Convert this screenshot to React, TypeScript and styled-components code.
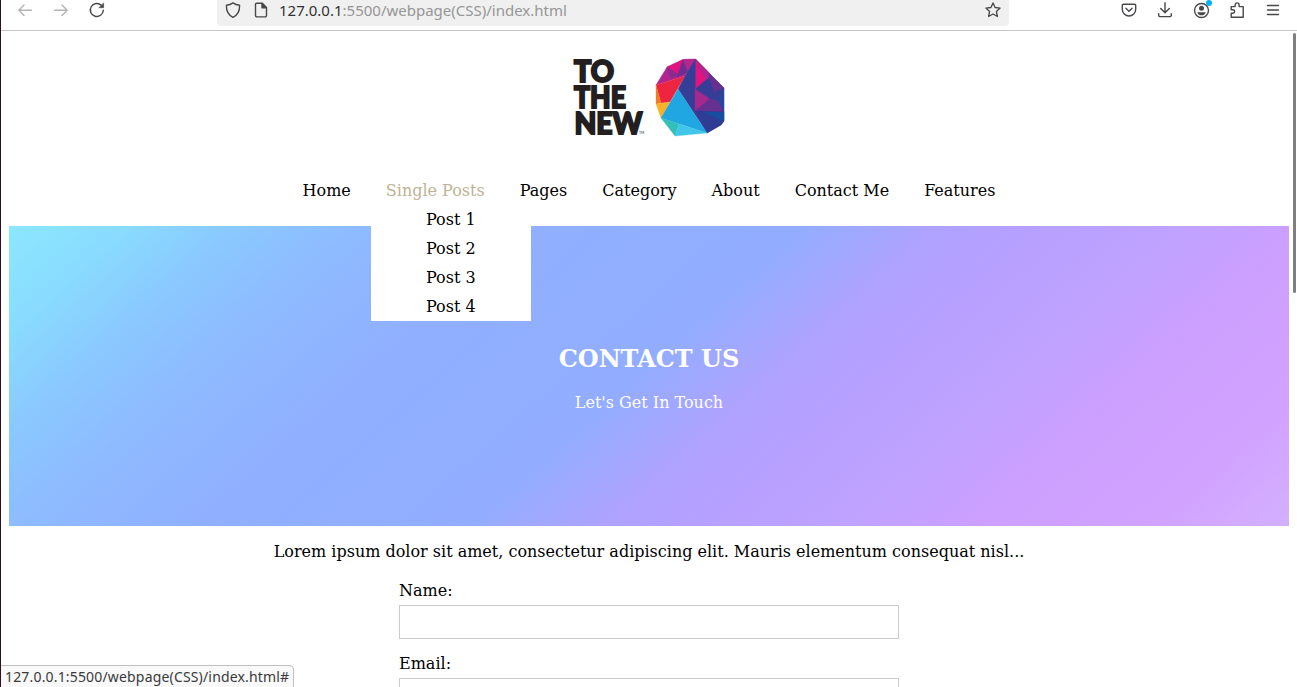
import React from "react";
import styled, { createGlobalStyle } from "styled-components";

const GlobalStyle = createGlobalStyle`
  * { box-sizing: border-box; }
  html, body { margin: 0; padding: 0; overflow: hidden; background: #fff; }
`;

const Window = styled.div`
  position: relative;
  height: 687px;
  overflow: hidden;
  border-left: 1px solid #2c0f22;
  background: #fff;
  color: #000;
  font: 16px/19px "DejaVu Serif", serif;
`;

const Toolbar = styled.header`
  display: flex;
  height: 31px;
  border-bottom: 1px solid #c6c6c6;
  color: #4a4a4f;
`;

const NavButtons = styled.div`
  display: flex;
  gap: 20px;
  width: 216px;
  padding: 2px 0 0 16px;
`;

const AddressBar = styled.div`
  display: flex;
  width: 792px;
  height: 26px;
  padding: 2px 8px 0;
  background: #f0f0f0;
  border-radius: 0 0 4px 4px;
`;

const Url = styled.div`
  flex: 1;
  margin: -2px 0 0 10px;
  color: #969696;
  font: 15px/20px "Noto Sans", "Open Sans", sans-serif;
  white-space: nowrap;
`;

const Host = styled.span`
  color: #333;
`;

const Actions = styled.div`
  display: flex;
  gap: 20px;
  margin-left: auto;
  padding: 2px 16px 0 0;
`;

const Glyph = styled.svg<{ $faded?: boolean; $gap?: number }>`
  display: block;
  flex: none;
  width: 16px;
  height: 16px;
  margin-right: ${(p) => p.$gap ?? 0}px;
  overflow: visible;
  fill: none;
  stroke: ${(p) => (p.$faded ? "#b4b4b4" : "#48484b")};
  stroke-width: 1.4;
  stroke-linecap: round;
  stroke-linejoin: round;
`;

const Page = styled.main`
  padding: 0 8px;
`;

const Brand = styled.div`
  display: flex;
  justify-content: center;
  height: 150px;
  padding-top: 14px;
`;

const Logo = styled.svg`
  display: block;
  width: 160px;
  height: 100px;
`;

const Menu = styled.nav`
  display: flex;
  justify-content: center;
  gap: 35px;
  height: 45px;
`;

const MenuItem = styled.div<{ $active?: boolean }>`
  position: relative;
  color: ${(p) => (p.$active ? "#bdb395" : "#000")};
  white-space: nowrap;
`;

const Dropdown = styled.div`
  position: absolute;
  top: 24px;
  left: -15px;
  width: 160px;
  background: #fff;
  color: #000;
  text-align: center;
`;

const DropdownItem = styled.div`
  padding: 5px;
`;

const Hero = styled.section`
  display: flex;
  flex-direction: column;
  align-items: center;
  height: 300px;
  padding-top: 118px;
  color: #fff;
  background: linear-gradient(
    138deg,
    #8ce7ff 0%,
    #89dcff 7%,
    #8ac9ff 14%,
    #8ebaff 22%,
    #90afff 33%,
    #92adff 49%,
    #b0a2ff 58%,
    #b8a0ff 65%,
    #c0a2ff 73%,
    #cd9fff 81%,
    #d1a2ff 91%,
    #d3b0ff 100%
  );
`;

const Title = styled.h1`
  margin: 0 0 20px;
  font-size: 24px;
  line-height: 29px;
`;

const Tagline = styled.p`
  margin: 0;
`;

const Intro = styled.p`
  margin: 16px 0 20px;
  text-align: center;
  white-space: nowrap;
`;

const Form = styled.form`
  display: flex;
  flex-direction: column;
  width: 500px;
  margin: 0 auto;
`;

const Field = styled.label`
  display: block;
  margin-bottom: 15px;
`;

const Input = styled.input`
  display: block;
  width: 100%;
  height: 34px;
  margin-top: 5px;
  padding: 8px;
  border: 1px solid #ccc;
  outline: none;
`;

const StatusTip = styled.div`
  position: absolute;
  left: 0;
  bottom: 0;
  width: 293px;
  height: 22px;
  padding-left: 4px;
  border: 1px solid #c0c0c0;
  border-width: 1px 1px 0 0;
  border-radius: 0 5px 0 0;
  background: #f9f9fa;
  color: #3a3a3a;
  font: 14px/22px "Noto Sans", "Open Sans", sans-serif;
  letter-spacing: 0.17px;
  white-space: nowrap;
`;

const Scrollbar = styled.div`
  position: absolute;
  top: 33px;
  right: 1px;
  width: 3px;
  height: 260px;
  border-radius: 2px;
  background: #7f7f7f;
`;

const shards: [string, string][] = [
  ["#353d97", "135.5,14 164,43 164,76 161,80 147,88 135,66"],
  ["#b0268e", "96,40 107,22 123,14.5 135.5,14 125,31"],
  ["#e0137f", "107,22 123,14.5 119,30"],
  ["#8b2a90", "107,22 119,30 111,34"],
  ["#6b2e91", "123,14.5 128,27 117,32"],
  ["#b5268c", "123,14.5 135.5,14 128,27"],
  ["#ee2540", "96,40 125,31 110,57 101,58"],
  ["#f37a20", "96,40 101,58 96,59"],
  ["#f9b225", "96,59 110,57 101,73"],
  ["#e0137f", "135.5,14 149,32 135,44"],
  ["#b0268e", "135.5,14 149.5,28 149,32 146,35"],
  ["#353d97", "135.5,14 135,66 147,88 118,44 125,31"],
  ["#663092", "149,28 164,43 154,47 149,32"],
  ["#29459c", "164,43 164,67 157,57"],
  ["#a5288f", "135,44 150,54 135,66"],
  ["#663092", "150,54 158,56 164,67 135,66"],
  ["#303c94", "135,66 164,67 164,76 161,80 147,88"],
  ["#164f9e", "143,67 164,67 164,76"],
  ["#20a6e0", "118,44 147,88 101,73"],
  ["#31bfb8", "101,73 119,79 115,91"],
  ["#3fc6e8", "119,79 147,88 115,91"],
];

function BrandLogo() {
  return (
    <Logo viewBox="9 0 160 100" role="img" aria-label="To The New">
      <g
        fill="#231f20"
        stroke="#231f20"
        strokeWidth="2"
        fontFamily="Lato, sans-serif"
        fontWeight="900"
        fontSize="30"
      >
        <text x="14" y="37" textLength="40" lengthAdjust="spacingAndGlyphs">TO</text>
        <text x="14" y="63" textLength="52" lengthAdjust="spacingAndGlyphs">THE</text>
        <text x="14.5" y="88.500" textLength="68" lengthAdjust="spacingAndGlyphs">NEW</text>
      </g>
      <text x="79" y="89" fontSize="3.5" fontFamily="Lato, sans-serif" fill="#231f20">TM</text>
      {shards.map(([fill, points], i) => (
        <polygon key={i} fill={fill} stroke={fill} strokeWidth=".3" points={points} />
      ))}
    </Logo>
  );
}

const menu = ["Home", "Single Posts", "Pages", "Category", "About", "Contact Me", "Features"];
const posts = ["Post 1", "Post 2", "Post 3", "Post 4"];

export default function App() {
  return (
    <Window>
      <GlobalStyle />
      <Toolbar>
        <NavButtons>
          <Glyph $faded viewBox="0 0 16 16"><path d="M14.5 8.3H1.8M7 3.1 1.8 8.3 7 13.5" /></Glyph>
          <Glyph $faded viewBox="0 0 16 16"><path d="M1.5 8.3h12.7M9 3.1 14.2 8.3 9 13.5" /></Glyph>
          <Glyph viewBox="0 0 16 16">
            <path d="M14.3 8.3A6.5 6.5 0 1 1 12.3 3.3" />
            <path d="M14.6 1.3v4.4h-4.4z" fill="#48484b" strokeWidth=".6" />
          </Glyph>
        </NavButtons>
        <AddressBar>
          <Glyph $gap={12} viewBox="0 0 16 16">
            <path d="M8 .9c2 1.4 4.2 2.1 6.6 2.4C14.8 9 13 13 8 15.4 3 13 1.2 9 1.4 3.3 3.8 3 6 2.3 8 .9z" />
          </Glyph>
          <Glyph viewBox="0 0 16 16">
            <path d="M3.5 1.2h5.8l4.2 4.2v8.1a1.4 1.4 0 0 1-1.4 1.4H3.9a1.4 1.4 0 0 1-1.4-1.4V2.2a1 1 0 0 1 1-1z" />
            <path d="M9 1.5v4.2h4.2z" fill="#48484b" />
          </Glyph>
          <Url><Host>127.0.0.1</Host>:5500/webpage(CSS)/index.html</Url>
          <Glyph viewBox="0 0 16 16">
            <path d="m8 .9 2.1 4.6 5 .6-3.7 3.4 1 5L8 12l-4.4 2.5 1-5L.9 6.1l5-.6z" strokeWidth="1.3" />
          </Glyph>
        </AddressBar>
        <Actions>
          <Glyph viewBox="0 0 16 16">
            <path d="M2.5 2.2h11a1.2 1.2 0 0 1 1.2 1.2v3.9a6.7 6.7 0 0 1-13.4 0V3.4a1.2 1.2 0 0 1 1.2-1.2zM4.9 6.3 8 9.2l3.1-2.9" />
          </Glyph>
          <Glyph viewBox="0 0 16 16">
            <path d="M8 .8v9.8M3.7 6.5 8 10.8l4.3-4.3M1.7 11.8v1.4a1.4 1.4 0 0 0 1.4 1.4h9.8a1.4 1.4 0 0 0 1.4-1.4v-1.4" />
          </Glyph>
          <Glyph viewBox="0 0 16 16">
            <circle cx="8.5" cy="8.5" r="7" />
            <circle cx="8.5" cy="6.3" r="2.5" fill="#48484b" stroke="none" />
            <path d="M4.4 10.2h8.2c0 2-2 3.1-4.1 3.1s-4.1-1.1-4.1-3.1z" fill="#48484b" stroke="none" />
            <circle cx="16" cy="1" r="3" fill="#00b3f4" stroke="none" />
          </Glyph>
          <Glyph viewBox="0 0 16 16">
            <path d="M2.2 6V4.6h3.9V2.9a2 2 0 0 1 4 0v1.7h4.1v10.6H2.2v-4h1.7a1.6 1.6 0 0 0 0-3.5H2.2z" />
          </Glyph>
          <Glyph viewBox="0 0 16 16"><path d="M2.500 3.500h11M2.500 8h11M2.500 12.500h11" /></Glyph>
        </Actions>
      </Toolbar>
      <Page>
        <Brand><BrandLogo /></Brand>
        <Menu>
          {menu.map((label) => (
            <MenuItem key={label} $active={label === "Single Posts"}>
              {label}
              {label === "Single Posts" && (
                <Dropdown>
                  {posts.map((post) => <DropdownItem key={post}>{post}</DropdownItem>)}
                </Dropdown>
              )}
            </MenuItem>
          ))}
        </Menu>
        <Hero>
          <Title>CONTACT US</Title>
          <Tagline>Let's Get In Touch</Tagline>
        </Hero>
        <Intro>Lorem ipsum dolor sit amet, consectetur adipiscing elit. Mauris elementum consequat nisl...</Intro>
        <Form>
          <Field>Name:<Input type="text" /></Field>
          <Field>Email:<Input type="email" /></Field>
        </Form>
      </Page>
      <Scrollbar />
      <StatusTip>127.0.0.1:5500/webpage(CSS)/index.html#</StatusTip>
    </Window>
  );
}
